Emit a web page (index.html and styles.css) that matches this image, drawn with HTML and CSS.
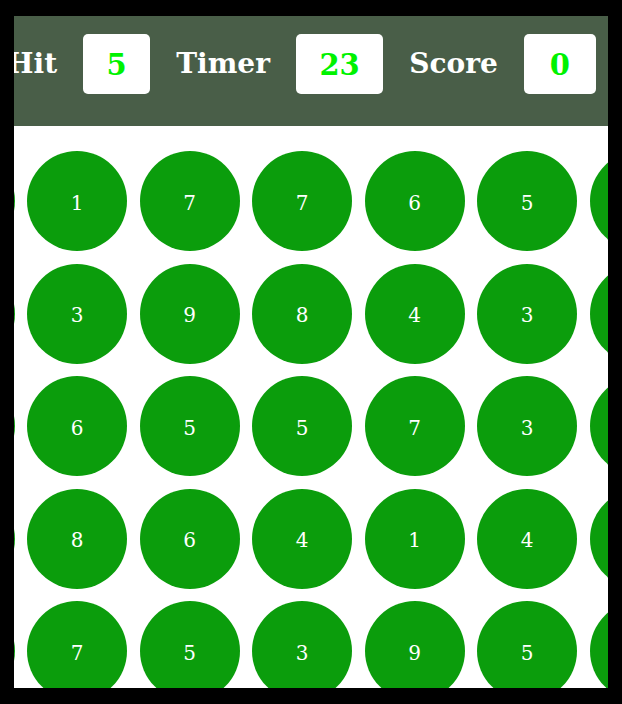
FILE: index.html
```html
<!DOCTYPE html>
<html lang="en">
<head>
<meta charset="utf-8">
<title>Bubble Game</title>
<link rel="stylesheet" href="styles.css">
</head>
<body>
<div class="main">
  <div class="panel-top">
    <div class="elem"><h2 class="label">Hit</h2><div class="box">5</div></div>
    <div class="elem"><h2 class="label">Timer</h2><div class="box">23</div></div>
    <div class="elem"><h2 class="label">Score</h2><div class="box box-score">0</div></div>
  </div>
  <div class="panel-bottom">
    <div class="bubbles">
      <div class="bubble">4</div><div class="bubble">1</div><div class="bubble">7</div><div class="bubble">7</div><div class="bubble">6</div><div class="bubble">5</div><div class="bubble">2</div><div class="bubble">8</div>
      <div class="bubble">2</div><div class="bubble">3</div><div class="bubble">9</div><div class="bubble">8</div><div class="bubble">4</div><div class="bubble">3</div><div class="bubble">6</div><div class="bubble">1</div>
      <div class="bubble">9</div><div class="bubble">6</div><div class="bubble">5</div><div class="bubble">5</div><div class="bubble">7</div><div class="bubble">3</div><div class="bubble">2</div><div class="bubble">4</div>
      <div class="bubble">5</div><div class="bubble">8</div><div class="bubble">6</div><div class="bubble">4</div><div class="bubble">1</div><div class="bubble">4</div><div class="bubble">7</div><div class="bubble">9</div>
      <div class="bubble">3</div><div class="bubble">7</div><div class="bubble">5</div><div class="bubble">3</div><div class="bubble">9</div><div class="bubble">5</div><div class="bubble">8</div><div class="bubble">2</div>
      <div class="bubble">6</div><div class="bubble">2</div><div class="bubble">4</div><div class="bubble">8</div><div class="bubble">1</div><div class="bubble">6</div><div class="bubble">3</div><div class="bubble">7</div>
    </div>
  </div>
</div>
</body>
</html>
```

FILE: styles.css
```css
* {
  margin: 0;
  padding: 0;
  box-sizing: border-box;
}

html, body {
  width: 100%;
  height: 100%;
}

body {
  background: #000;
  font-family: "DejaVu Serif", "Liberation Serif", serif;
  padding: 16px 14px;
}

.main {
  width: 594px;
  height: 672px;
  background: #fff;
  overflow: hidden;
}

.panel-top {
  height: 110px;
  background: #495e48;
  display: flex;
  justify-content: flex-end;
  align-items: flex-start;
  gap: 26px;
  padding: 17px 12px 0 0;
  color: #fff;
}

.elem {
  display: flex;
  align-items: center;
  gap: 26px;
  flex-shrink: 0;
}

.label {
  font-size: 28px;
  font-weight: 700;
  line-height: 62px;
  white-space: nowrap;
}

.box {
  height: 60px;
  padding: 0 23.5px;
  background: #fff;
  color: #00f200;
  border-radius: 5px;
  font-size: 29px;
  font-weight: 700;
  line-height: 62px;
}

.box-score {
  padding: 0 26px;
}

.panel-bottom {
  height: 562px;
  padding-top: 25px;
}

.bubbles {
  width: 887.5px;
  margin-left: -99.5px;
  display: flex;
  flex-wrap: wrap;
  gap: 12.5px;
}

.bubble {
  width: 100px;
  height: 100px;
  border-radius: 50%;
  background: #0b9d0c;
  color: #fff;
  font-size: 20px;
  line-height: 1;
  padding-top: 3px;
  display: flex;
  align-items: center;
  justify-content: center;
}
```
